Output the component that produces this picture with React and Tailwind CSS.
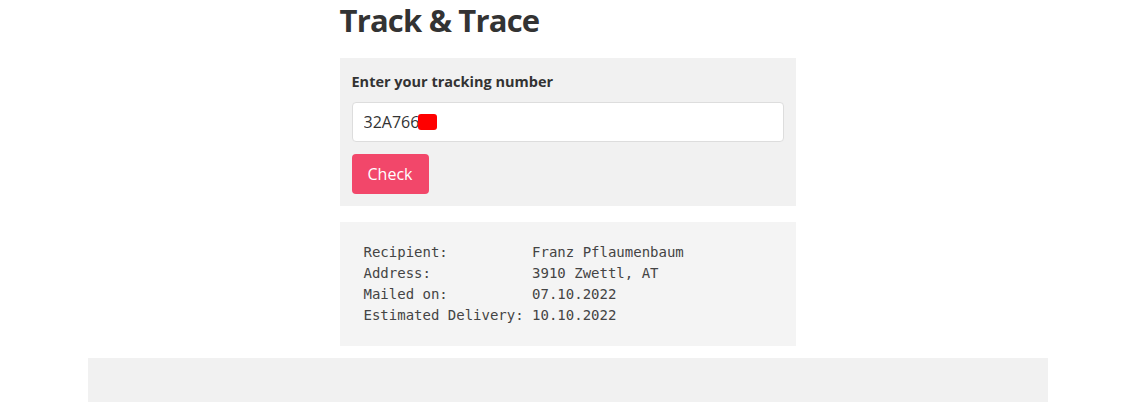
import React, { useState } from 'react';

const rows = [
  ['Recipient:', 'Franz Pflaumenbaum'],
  ['Address:', '3910 Zwettl, AT'],
  ['Mailed on:', '07.10.2022'],
  ['Estimated Delivery:', '10.10.2022'],
];

const App = () => {
  const [tracking, setTracking] = useState('32A766');

  const pre = rows.map(([k, v]) => k.padEnd(20, ' ') + v).join('\n');

  return (
    <div className="min-h-[402px] bg-white text-[#333] font-['Open_Sans',sans-serif]">
      <div className="w-[456px] mx-auto">
        <h1 className="text-[31px] font-bold leading-[38px] tracking-[-0.8px] pt-px">Track &amp; Trace</h1>

        {/* Form */}
        <div className="mt-[19px] bg-[#f1f1f1] p-3">
          <label className="block text-[14.5px] font-bold leading-[20px] mt-[2px]">Enter your tracking number</label>
          <div className="relative mt-[10px]">
            <input
              value={tracking}
              onChange={e => setTracking(e.target.value)}
              className="w-full h-10 bg-white border border-[#ddd] rounded px-[11px] text-[16px] text-[#333] outline-none"
            />
            <span className="absolute left-[66px] top-3 w-[19px] h-4 bg-[#ff0000] rounded-[3px]"></span>
          </div>
          <button className="mt-3 h-10 w-[77px] rounded bg-[#f2476a] text-white text-[16px]">Check</button>
        </div>

        {/* Result */}
        <div className="mt-4 bg-[#f4f4f4] px-6 pt-[20px] pb-[20px]">
          <pre className="font-['DejaVu_Sans_Mono',monospace] text-[14px] leading-[21px] text-[#444]">{pre}</pre>
        </div>
      </div>

      {/* Footer */}
      <div className="w-[960px] mx-auto mt-3 h-[44px] bg-[#f1f1f1]"></div>
    </div>
  );
};

export default App;
